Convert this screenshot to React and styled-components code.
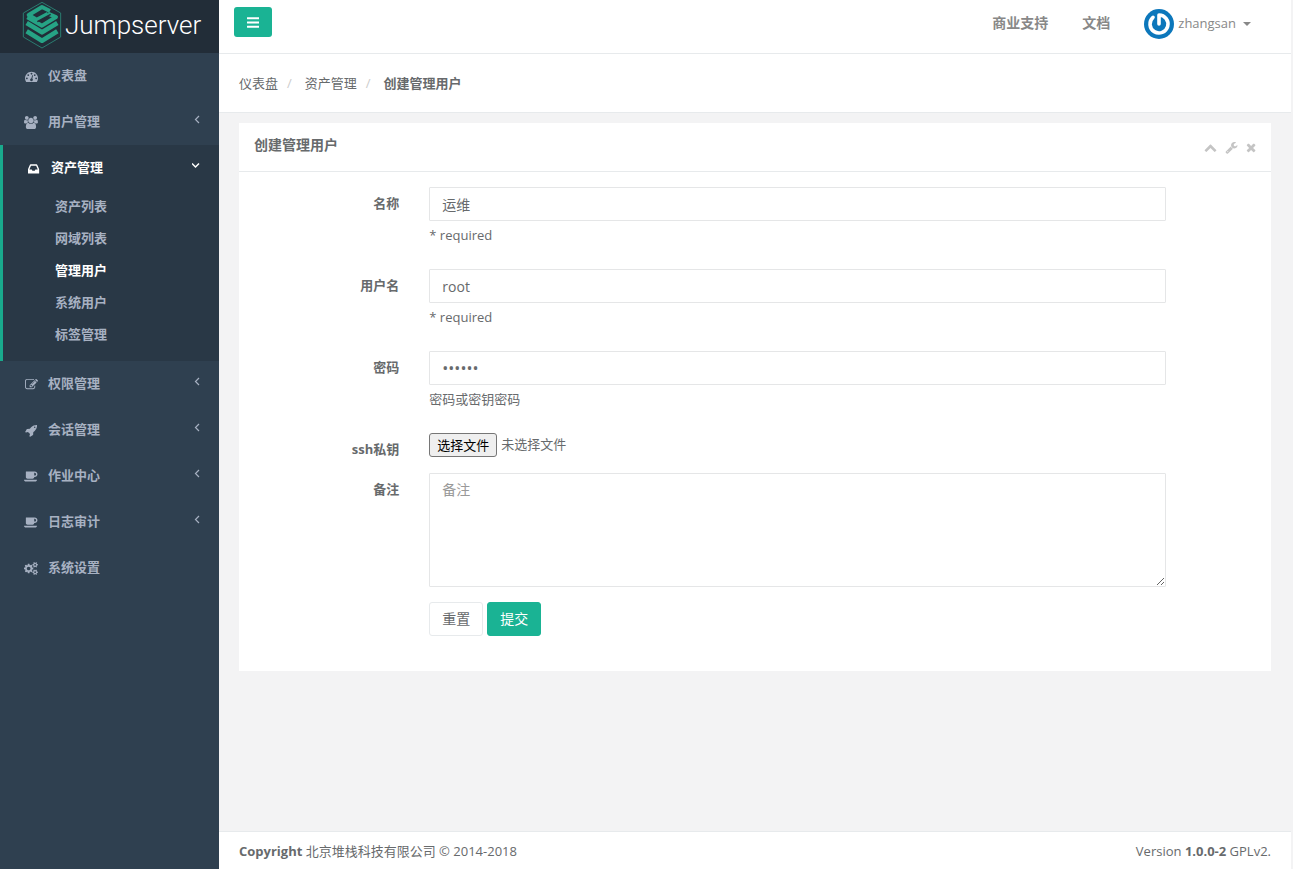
import React, { useRef, useState } from 'react';
import styled, { createGlobalStyle } from 'styled-components';

const GlobalStyle = createGlobalStyle`
  * {
    box-sizing: border-box;
  }

  body {
    margin: 0;
    background: #2f4050;
    color: #676a6c;
    font-family: "Open Sans", "Noto Sans CJK SC", sans-serif;
    font-size: 13px;
    line-height: 18px;
  }

  a {
    color: inherit;
    text-decoration: none;
  }

  button, input, textarea {
    font-family: inherit;
  }
`;

const smallCog = 'v140q0 16-149 31-12 27-30 52 51 113 51 138 0 4-4 7-122 71-124 71-8 0-46-47t-52-68q-20 2-30 2t-30-2q-14 21-52 68t-46 47q-2 0-124-71-4-3-4-7 0-25 51-138-18-25-30-52-149-15-149-31v-140q0-16 149-31 13-29 30-52-51-113-51-138 0-4 4-7 4-2 35-20t59-34 30-16q8 0 46 46.5t52 67.5q20-2 30-2t30 2q51-71 92-112l6-2q4 0 124 70 4 3 4 7 0 25-51 138 17 23 30 52 149 15 149 31z';

const ICONS = {
  dashboard: [1792, 'M384 1152q0-53-37.5-90.5t-90.5-37.5-90.5 37.5-37.5 90.5 37.5 90.5 90.5 37.5 90.5-37.5 37.5-90.5zm192-448q0-53-37.5-90.5t-90.5-37.5-90.5 37.5-37.5 90.5 37.5 90.5 90.5 37.5 90.5-37.5 37.5-90.5zm428 481l101-382q6-26-7.5-48.5t-38.5-29.5-48 6.5-30 39.5l-101 382q-60 5-107 43.5t-63 98.5q-20 77 20 146t117 89 146-20 89-117q16-60-6-117t-72-91zm660-33q0-53-37.5-90.5t-90.5-37.5-90.5 37.5-37.5 90.5 37.5 90.5 90.5 37.5 90.5-37.5 37.5-90.5zm-640-640q0-53-37.5-90.5t-90.5-37.5-90.5 37.5-37.5 90.5 37.5 90.5 90.5 37.5 90.5-37.5 37.5-90.5zm448 192q0-53-37.5-90.5t-90.5-37.5-90.5 37.5-37.5 90.5 37.5 90.5 90.5 37.5 90.5-37.5 37.5-90.5zm320 448q0 261-141 483-19 29-54 29h-1402q-35 0-54-29-141-221-141-483 0-182 71-348t191-286 286-191 348-71 348 71 286 191 191 286 71 348z'],
  users: [1920, 'M593 896q-162 5-265 128h-134q-82 0-138-40.5t-56-118.5q0-353 124-353 6 0 43.5 21t97.5 42.5 119 21.5q67 0 133-23-5 37-5 66 0 139 81 256zm1071 637q0 120-73 189.5t-194 69.5h-874q-121 0-194-69.5t-73-189.5q0-53 3.5-103.5t14-109 26.5-108.5 43-97.5 62-81 85.5-53.5 111.5-20q10 0 43 21.5t73 48 107 48 135 21.5 135-21.5 107-48 73-48 43-21.5q61 0 111.5 20t85.5 53.5 62 81 43 97.5 26.5 108.5 14 109 3.5 103.5zm-1024-1277q0 106-75 181t-181 75-181-75-75-181 75-181 181-75 181 75 75 181zm704 384q0 159-112.5 271.5t-271.5 112.5-271.5-112.5-112.5-271.5 112.5-271.5 271.5-112.5 271.5 112.5 112.5 271.5zm576 225q0 78-56 118.5t-138 40.5h-134q-103-123-265-128 81-117 81-256 0-29-5-66 66 23 133 23 59 0 119-21.5t97.5-42.5 43.5-21q124 0 124 353zm-128-609q0 106-75 181t-181 75-181-75-75-181 75-181 181-75 181 75 75 181z'],
  inbox: [1536, 'M1023 1024h316q-1-3-2.5-8.5t-2.5-7.5l-212-496h-708l-212 496q-1 3-2.5 8.5t-2.5 7.5h316l95 192h320zm513 30v482q0 26-19 45t-45 19h-1408q-26 0-45-19t-19-45v-482q0-62 25-123l238-552q10-25 36.5-42t52.5-17h832q26 0 52.5 17t36.5 42l238 552q25 61 25 123z'],
  edit: [1792, 'M888 1184l116-116-152-152-116 116v56h96v96h56zm440-720q-16-16-33 1l-350 350q-17 17-1 33t33-1l350-350q17-17 1-33zm80 594v190q0 119-84.5 203.5t-203.5 84.5h-832q-119 0-203.5-84.5t-84.5-203.5v-832q0-119 84.5-203.5t203.5-84.5h832q63 0 117 25 15 7 18 23 3 17-9 29l-49 49q-14 14-32 8-23-6-45-6h-832q-66 0-113 47t-47 113v832q0 66 47 113t113 47h832q66 0 113-47t47-113v-126q0-13 9-22l64-64q15-15 35-7t20 29zm-96-738l288 288-672 672h-288v-288zm444 132l-92 92-288-288 92-92q28-28 68-28t68 28l152 152q28 28 28 68t-28 68z'],
  rocket: [1664, 'M1440 448q0-40-28-68t-68-28-68 28-28 68 28 68 68 28 68-28 28-68zm224-288q0 249-75.5 430.5t-253.5 360.5q-81 80-195 176l-20 379q-2 16-16 26l-384 224q-7 4-16 4-12 0-23-9l-64-64q-13-14-8-32l85-276-281-281-276 85q-3 1-9 1-14 0-23-9l-64-64q-17-19-5-39l224-384q10-14 26-16l379-20q96-114 176-195 188-187 358-258t431-71q14 0 24 9.5t10 22.5z'],
  coffee: [1920, 'M1664 576q0-80-56-136t-136-56h-64v384h64q80 0 136-56t56-136zm-1664 768h1792q0 106-75 181t-181 75h-1280q-106 0-181-75t-75-181zm1856-768q0 159-112.5 271.5t-271.5 112.5h-64v32q0 92-66 158t-158 66h-704q-92 0-158-66t-66-158v-736q0-26 19-45t45-19h1152q159 0 271.5 112.5t112.5 271.5z'],
  cogs: [1920, 'M896 896q0-106-75-181t-181-75-181 75-75 181 75 181 181 75 181-75 75-181zm768 512q0-52-38-90t-90-38-90 38-38 90q0 53 37.5 90.5t90.5 37.5 90.5-37.5 37.5-90.5zm0-1024q0-52-38-90t-90-38-90 38-38 90q0 53 37.5 90.5t90.5 37.5 90.5-37.5 37.5-90.5zm-384 421v185q0 10-7 19.5t-16 10.5l-155 24q-11 35-32 76 34 48 90 115 7 11 7 20 0 12-7 19-23 30-82.5 89.5t-78.5 59.5q-11 0-21-7l-115-90q-37 19-77 31-11 108-23 155-7 24-30 24h-186q-11 0-20-7.5t-10-17.5l-23-153q-34-10-75-31l-118 89q-7 7-20 7-11 0-21-8-144-133-144-160 0-9 7-19 10-14 41-53t47-61q-23-44-35-82l-152-24q-10-1-17-9.5t-7-19.5v-185q0-10 7-19.5t16-10.5l155-24q11-35 32-76-34-48-90-115-7-11-7-20 0-12 7-20 22-30 82-89t79-59q11 0 21 7l115 90q34-18 77-32 11-108 23-154 7-24 30-24h186q11 0 20 7.5t10 17.5l23 153q34 10 75 31l118-89q8-7 20-7 11 0 21 8 144 133 144 160 0 8-7 19-12 16-42 54t-45 60q23 48 34 82l152 23q10 2 17 10.5t7 19.5zM1920 1338' + smallCog + 'M1920 314' + smallCog],
  up: [1792, 'M1683 1331l-166 165q-19 19-45 19t-45-19l-531-531-531 531q-19 19-45 19t-45-19l-166-165q-19-19-19-45.5t19-45.5l742-741q19-19 45-19t45 19l742 741q19 19 19 45.5t-19 45.5z'],
  wrench: [1792, 'M448 1472q0-26-19-45t-45-19-45 19-19 45 19 45 45 19 45-19 19-45zm644-420l-682 682q-37 37-90 37-52 0-91-37l-106-108q-38-36-38-90 0-53 38-91l681-681q39 98 114.5 173.5t173.5 114.5zm634-435q0 39-23 106-47 134-164.5 217.5t-258.5 83.5q-185 0-316.5-131.5t-131.5-316.5 131.5-316.5 316.5-131.5q58 0 121.5 16.5t107.5 46.5q16 11 16 28t-16 28l-293 169v224l193 107q5-3 79-48.5t135.5-81 70.5-35.5q15 0 23.5 10t8.5 25z'],
  times: [1408, 'M1298 1322q0 40-28 68l-136 136q-28 28-68 28t-68-28l-294-294-294 294q-28 28-68 28t-68-28l-136-136q-28-28-28-68t28-68l294-294-294-294q-28-28-28-68t28-68l136-136q28-28 68-28t68 28l294 294 294-294q28-28 68-28t68 28l136 136q28 28 28 68t-28 68l-294 294 294 294q28 28 28 68z'],
  bars: [1536, 'M1536 1344v128q0 26-19 45t-45 19h-1408q-26 0-45-19t-19-45v-128q0-26 19-45t45-19h1408q26 0 45 19t19 45zm0-512v128q0 26-19 45t-45 19h-1408q-26 0-45-19t-19-45v-128q0-26 19-45t45-19h1408q26 0 45 19t19 45zm0-512v128q0 26-19 45t-45 19h-1408q-26 0-45-19t-19-45v-128q0-26 19-45t45-19h1408q26 0 45 19t19 45z'],
};

const MENU = [
  { title: '仪表盘', icon: 'dashboard' },
  { title: '用户管理', icon: 'users', sub: [] },
  {
    title: '资产管理',
    icon: 'inbox',
    active: true,
    sub: ['资产列表', '网域列表', '管理用户', '系统用户', '标签管理'],
  },
  { title: '权限管理', icon: 'edit', sub: [] },
  { title: '会话管理', icon: 'rocket', sub: [] },
  { title: '作业中心', icon: 'coffee', sub: [] },
  { title: '日志审计', icon: 'coffee', sub: [] },
  { title: '系统设置', icon: 'cogs' },
];

const Wrapper = styled.div`
  display: flex;
  min-height: 100vh;
`;

const Sidebar = styled.nav`
  flex: 0 0 219px;
  background: #2f4050;
`;

const Brand = styled.a`
  display: flex;
  align-items: center;
  gap: 3px;
  height: 53px;
  padding: 0 0 4px 22px;
  background: #222d38;
  color: #fff;
  font-family: "Roboto", sans-serif;
  font-size: 26px;
  font-weight: 300;
  line-height: 32px;
`;

const MenuList = styled.ul`
  list-style-type: none;
  margin: 0;
  padding: 0;
`;

const MenuItem = styled.li`
  background: ${({ $active }) => $active ? '#293846' : 'transparent'};
  border-left: ${({ $active }) => $active ? '3px solid #19aa8d' : 'none'};
  color: ${({ $active }) => $active ? '#fff' : '#a7b1c2'};
`;

const MenuLink = styled.a`
  display: flex;
  align-items: center;
  height: 46px;
  padding: 0 18px 0 24px;
  font-weight: 600;
`;

const MenuIcon = styled.span`
  display: flex;
  justify-content: center;
  width: 14px;
  margin-right: 10px;
`;

const MenuTitle = styled.span`
  flex: 1;
  padding-bottom: 2px;
`;

const Arrow = styled.svg`
  margin-bottom: 6px;
`;

const SubList = styled.ul`
  list-style-type: none;
  margin: 0;
  padding: 0 0 10px;
`;

const SubLink = styled.a`
  display: block;
  padding: 6px 10px 8px 52px;
  color: ${({ $current }) => $current ? '#fff' : '#a7b1c2'};
  font-weight: 600;
`;

const Page = styled.div`
  flex: 1;
  min-width: 0;
  display: flex;
  flex-direction: column;
  background: #f3f3f4;
  border-right: 2px solid #f3f3f4;
`;

const TopBar = styled.header`
  display: flex;
  align-items: flex-start;
  justify-content: space-between;
  height: 54px;
  padding: 7px 40px 0 15px;
  background: #fff;
  border-bottom: 1px solid #e7eaec;
`;

const ToggleButton = styled.button`
  display: flex;
  align-items: center;
  justify-content: center;
  width: 38px;
  height: 30px;
  padding: 0;
  border: none;
  border-radius: 3px;
  background: #1ab394;
  color: #fff;
  cursor: pointer;
`;

const TopLinks = styled.div`
  display: flex;
  align-items: center;
  gap: 34px;
  padding-top: 2px;
  color: #888;
`;

const TopLink = styled.a`
  padding-bottom: 2px;
  font-size: 14px;
  font-weight: 600;
`;

const Profile = styled.a`
  display: flex;
  align-items: center;
  gap: 4px;
`;

const UserName = styled.span`
  padding-bottom: 2px;
`;

const Caret = styled.span`
  margin-left: 3px;
  border: 4px solid transparent;
  border-top-color: currentColor;
  border-bottom: none;
`;

const Breadcrumb = styled.ol`
  display: flex;
  list-style-type: none;
  margin: 0;
  padding: 20px;
  background: #fff;
  border-bottom: 1px solid #e7eaec;

  li + li::before {
    content: "/";
    padding: 0 13px 0 9px;
    color: #ccc;
    font-weight: 400;
  }

  li:last-child {
    font-weight: 600;
  }
`;

const Content = styled.main`
  flex: 1;
  padding: 10px 20px 40px;
`;

const Panel = styled.section`
  background: #fff;
`;

const PanelHead = styled.div`
  display: flex;
  align-items: center;
  justify-content: space-between;
  height: 49px;
  padding: 0 15px 4px;
  border-bottom: 1px solid #e7eaec;
`;

const PanelTitle = styled.h5`
  margin: 0;
  font-size: 14px;
  font-weight: 600;
`;

const PanelTools = styled.div`
  display: flex;
  gap: 8px;
  padding-top: 4px;
  color: #c4c4c4;
`;

const ToolButton = styled.button`
  display: flex;
  padding: 0;
  border: none;
  background: none;
  color: inherit;
  cursor: pointer;
`;

const Form = styled.form`
  padding: 15px 5px 35px;
`;

const FormRow = styled.div`
  display: flex;
  margin-bottom: ${({ $gap }) => $gap}px;
`;

const Label = styled.label`
  flex: 0 0 16.6667%;
  padding: 7px 15px 0;
  text-align: right;
  font-weight: 700;
`;

const Field = styled.div`
  flex: 0 0 75%;
  margin-left: ${({ $offset }) => $offset ? '16.6667%' : '0'};
  padding: 0 15px;
`;

const TextInput = styled.input`
  display: block;
  width: 100%;
  height: 34px;
  padding: 6px 12px;
  border: 1px solid #e5e6e7;
  border-radius: 1px;
  background: #fff;
  color: #676a6c;
  font-size: ${({ type }) => type === 'password' ? 16 : 14}px;
  outline: none;

  &:focus {
    border-color: #1ab394;
  }
`;

const TextArea = styled(TextInput)`
  height: 114px;
  line-height: 20px;
  resize: vertical;

  &::placeholder {
    color: #999;
  }
`;

const Help = styled.span`
  display: block;
  margin-top: 5px;
`;

const FilePicker = styled.div`
  display: flex;
  align-items: center;
  gap: 4px;
  height: 24px;
`;

const HiddenFile = styled.input`
  position: absolute;
  width: 1px;
  height: 1px;
  opacity: 0;
`;

const FileButton = styled.button`
  height: 24px;
  padding: 0 7px 2px;
  border: 1px solid #767676;
  border-radius: 3px;
  background: #efefef;
  color: #000;
  font-size: 13px;
`;

const FileName = styled.span`
  padding-bottom: 2px;
`;

const Buttons = styled.div`
  display: flex;
  gap: 4px;
`;

const Button = styled.button`
  height: 34px;
  padding: 0 12px 2px;
  border: 1px solid ${({ $primary }) => $primary ? '#1ab394' : '#e7eaec'};
  border-radius: 3px;
  background: ${({ $primary }) => $primary ? '#1ab394' : '#fff'};
  color: ${({ $primary }) => $primary ? '#fff' : '#676a6c'};
  font-size: 14px;
  cursor: pointer;
`;

const Footer = styled.footer`
  display: flex;
  justify-content: space-between;
  padding: 10px 20px 9px;
  background: #fff;
  border-top: 1px solid #e7eaec;
`;

const Icon = ({ name, size = 13 }) => {
  const [width, path] = ICONS[name];
  return <svg
    width={width / 1792 * size}
    height={size}
    viewBox={`0 0 ${width} 1792`}
    fill="currentColor"
    aria-hidden="true"
  >
    <path d={path}/>
  </svg>;
};

const Logo = () => (
  <svg width="40" height="48" viewBox="0 0 120 144" aria-hidden="true">
    <path d="M60 4L116 36V108L60 141L4 108V36Z" fill="none" stroke="#2a7c70" strokeWidth="3"/>
    <g fill="none" stroke="#26a385" strokeWidth="12" strokeLinejoin="round">
      <path d="M84 30L60 18L20 42L44 56L78 38"/>
      <path d="M78 38L102 48L60 74L16 49"/>
      <path d="M14 66L60 94L106 66" strokeWidth="14"/>
      <path d="M14 91L60 119L106 91" strokeWidth="14"/>
    </g>
    <path d="M46 62L86 40" stroke="#222d38" strokeWidth="4"/>
  </svg>
);

const Avatar = () => (
  <svg width="30" height="30" viewBox="0 0 30 30" fill="none" aria-hidden="true">
    <circle cx="15" cy="15" r="15" fill="#0c77bb"/>
    <path d="M15 15V6A9 9 0 1 1 9 8.300" stroke="#fff" strokeWidth="3.600" strokeLinecap="round" strokeLinejoin="round"/>
  </svg>
);

const MenuArrow = ({ open }) => (
  <Arrow width="9" height="9" viewBox="0 0 9 9" fill="none" stroke="currentColor" aria-hidden="true">
    {open
      ? <path d="M0 2.500L3.500 6L7 2.500" strokeWidth="1.500"/>
      : <path d="M7 1L3.500 4.500L7 8" strokeWidth="1.200"/>}
  </Arrow>
);

const Menu = () => {
  return <MenuList>
    {MENU.map((item) => (
      <MenuItem key={item.title} $active={item.active}>
        <MenuLink href="#">
          <MenuIcon><Icon name={item.icon}/></MenuIcon>
          <MenuTitle>{item.title}</MenuTitle>
          {item.sub && <MenuArrow open={item.active}/>}
        </MenuLink>
        {item.active && <SubList>
          {item.sub.map((name) => (
            <li key={name}>
              <SubLink href="#" $current={name === '管理用户'}>{name}</SubLink>
            </li>
          ))}
        </SubList>}
      </MenuItem>
    ))}
  </MenuList>;
};

const AdminUserForm = () => {
  const [name, setName] = useState('运维');
  const [username, setUsername] = useState('root');
  const [password, setPassword] = useState('123456');
  const [fileName, setFileName] = useState('未选择文件');
  const fileInput = useRef(null);

  return <Form onSubmit={(e) => e.preventDefault()}>
    <FormRow $gap={25}>
      <Label htmlFor="name">名称</Label>
      <Field>
        <TextInput id="name" type="text" value={name} onChange={(e) => setName(e.target.value)}/>
        <Help>* required</Help>
      </Field>
    </FormRow>
    <FormRow $gap={25}>
      <Label htmlFor="username">用户名</Label>
      <Field>
        <TextInput id="username" type="text" value={username} onChange={(e) => setUsername(e.target.value)}/>
        <Help>* required</Help>
      </Field>
    </FormRow>
    <FormRow $gap={25}>
      <Label htmlFor="password">密码</Label>
      <Field>
        <TextInput id="password" type="password" value={password} onChange={(e) => setPassword(e.target.value)}/>
        <Help>密码或密钥密码</Help>
      </Field>
    </FormRow>
    <FormRow $gap={15}>
      <Label htmlFor="private-key">ssh私钥</Label>
      <Field>
        <FilePicker>
          <HiddenFile
            id="private-key"
            ref={fileInput}
            type="file"
            tabIndex={-1}
            onChange={(e) => setFileName(e.target.files[0]?.name || '未选择文件')}
          />
          <FileButton type="button" onClick={() => fileInput.current.click()}>选择文件</FileButton>
          <FileName>{fileName}</FileName>
        </FilePicker>
      </Field>
    </FormRow>
    <FormRow $gap={15}>
      <Label htmlFor="comment">备注</Label>
      <Field>
        <TextArea as="textarea" id="comment" placeholder="备注"/>
      </Field>
    </FormRow>
    <FormRow $gap={0}>
      <Field $offset>
        <Buttons>
          <Button type="reset">重置</Button>
          <Button type="submit" $primary>提交</Button>
        </Buttons>
      </Field>
    </FormRow>
  </Form>;
};

const App = () => {
  return <Wrapper>
    <GlobalStyle/>
    <Sidebar>
      <Brand href="#"><Logo/>Jumpserver</Brand>
      <Menu/>
    </Sidebar>
    <Page>
      <TopBar>
        <ToggleButton type="button" aria-label="menu"><Icon name="bars" size={15}/></ToggleButton>
        <TopLinks>
          <TopLink href="#">商业支持</TopLink>
          <TopLink href="#">文档</TopLink>
          <Profile href="#"><Avatar/><UserName>zhangsan</UserName><Caret/></Profile>
        </TopLinks>
      </TopBar>
      <Breadcrumb>
        <li><a href="#">仪表盘</a></li>
        <li><a href="#">资产管理</a></li>
        <li>创建管理用户</li>
      </Breadcrumb>
      <Content>
        <Panel>
          <PanelHead>
            <PanelTitle>创建管理用户</PanelTitle>
            <PanelTools>
              <ToolButton type="button" aria-label="collapse"><Icon name="up"/></ToolButton>
              <ToolButton type="button" aria-label="settings"><Icon name="wrench"/></ToolButton>
              <ToolButton type="button" aria-label="close"><Icon name="times"/></ToolButton>
            </PanelTools>
          </PanelHead>
          <AdminUserForm/>
        </Panel>
      </Content>
      <Footer>
        <div><strong>Copyright</strong> 北京堆栈科技有限公司 © 2014-2018</div>
        <div>Version <strong>1.0.0-2</strong> GPLv2.</div>
      </Footer>
    </Page>
  </Wrapper>;
};

export default App;
